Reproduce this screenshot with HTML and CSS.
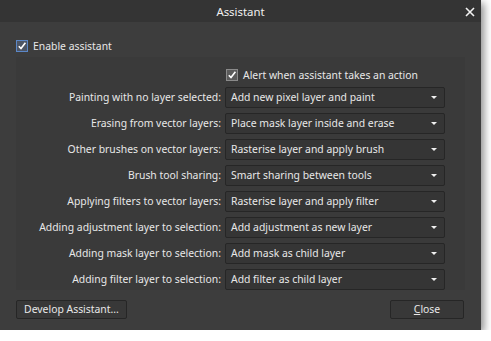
FILE: index.html
```html
<!DOCTYPE html>
<html lang="en">
<head>
	<meta charset="UTF-8">
	<title>Assistant</title>
	<link rel="stylesheet" href="styles.css">
</head>
<body>
	<div class="dialog">
		<div class="titlebar">
			<span class="title">Assistant</span>
			<svg class="close-x" width="10" height="10" viewBox="0 0 10 10"><path d="M1 1L9 9M9 1L1 9" stroke="#f2f2f2" stroke-width="1.6"/></svg>
		</div>
		<div class="content">
			<label class="check-row enable">
				<span class="box focus"><svg width="10" height="10" viewBox="0 0 10 10"><path d="M1.8 5.2L4 7.6L8.4 1.8" fill="none" stroke="#fff" stroke-width="1.6"/></svg></span>
				Enable assistant
			</label>
			<div class="panel">
				<label class="check-row alert">
					<span class="box"><svg width="10" height="10" viewBox="0 0 10 10"><path d="M1.8 5.2L4 7.6L8.4 1.8" fill="none" stroke="#fff" stroke-width="1.6"/></svg></span>
					Alert when assistant takes an action
				</label>
				<div class="rows">
					<span class="lbl">Painting with no layer selected:</span>
					<div class="select">Add new pixel layer and paint<i class="arrow"></i></div>
					<span class="lbl">Erasing from vector layers:</span>
					<div class="select">Place mask layer inside and erase<i class="arrow"></i></div>
					<span class="lbl">Other brushes on vector layers:</span>
					<div class="select">Rasterise layer and apply brush<i class="arrow"></i></div>
					<span class="lbl">Brush tool sharing:</span>
					<div class="select">Smart sharing between tools<i class="arrow"></i></div>
					<span class="lbl">Applying filters to vector layers:</span>
					<div class="select">Rasterise layer and apply filter<i class="arrow"></i></div>
					<span class="lbl">Adding adjustment layer to selection:</span>
					<div class="select">Add adjustment as new layer<i class="arrow"></i></div>
					<span class="lbl">Adding mask layer to selection:</span>
					<div class="select">Add mask as child layer<i class="arrow"></i></div>
					<span class="lbl">Adding filter layer to selection:</span>
					<div class="select">Add filter as child layer<i class="arrow"></i></div>
				</div>
			</div>
			<div class="buttons">
				<button class="btn develop">Develop Assistant...</button>
				<button class="btn close"><u>C</u>lose</button>
			</div>
		</div>
	</div>
</body>
</html>
```

FILE: styles.css
```css
body {
	margin: 0;
	background: #fff;
	font-family: "Noto Sans", "Open Sans", sans-serif;
	font-size: 10.4px;
	color: #e8e8e8;
}

.dialog {
	width: 481px;
	height: 330px;
	background: #3d3d3d;
	box-shadow: 3px 3px 8px rgba(0, 0, 0, 0.45);
	display: flex;
	flex-direction: column;
}

.titlebar {
	height: 22px;
	background: #343434;
	display: flex;
	align-items: center;
	justify-content: center;
	position: relative;
}

.title {
	font-size: 11.4px;
	color: #f0f0f0;
}

.close-x {
	position: absolute;
	right: 6px;
	top: 7px;
}

.content {
	padding: 0 16px;
}

.check-row {
	display: flex;
	align-items: center;
	gap: 5px;
	height: 14px;
	line-height: 14px;
	white-space: nowrap;
}

.enable {
	margin-top: 17px;
}

.box {
	width: 10px;
	height: 10px;
	border: 1px solid #8a8a8a;
	background: #5a5a5a;
	display: flex;
	align-items: center;
	justify-content: center;
}

.box.focus {
	border-color: #5b87c7;
	background: #4d5564;
}

.panel {
	margin-top: 4px;
	background: #3a3a3a;
	height: 233px;
	padding: 11px 20px 0 0;
	box-sizing: border-box;
}

.alert {
	margin-left: 210px;
}

.rows {
	margin-top: 5px;
	display: grid;
	grid-template-columns: 1fr 220px;
	column-gap: 4px;
	row-gap: 5px;
}

.lbl {
	text-align: right;
	line-height: 21px;
	white-space: nowrap;
}

.select {
	height: 21px;
	box-sizing: border-box;
	border: 1px solid #262626;
	border-radius: 2px;
	background: #353535;
	padding-left: 5px;
	line-height: 19px;
	position: relative;
	white-space: nowrap;
}

.arrow {
	position: absolute;
	right: 7px;
	top: 8px;
	width: 0;
	height: 0;
	border-left: 3px solid transparent;
	border-right: 3px solid transparent;
	border-top: 3px solid #f0f0f0;
}

.buttons {
	display: flex;
	justify-content: space-between;
	margin-top: 10px;
}

.btn {
	height: 19px;
	border: 1px solid #262626;
	border-radius: 2px;
	background: #383838;
	color: #e8e8e8;
	font-family: inherit;
	font-size: 10.4px;
	padding: 0;
	line-height: 17px;
	white-space: nowrap;
}

.develop {
	width: 111px;
}

.close {
	width: 74px;
	margin-right: 1px;
}
```
